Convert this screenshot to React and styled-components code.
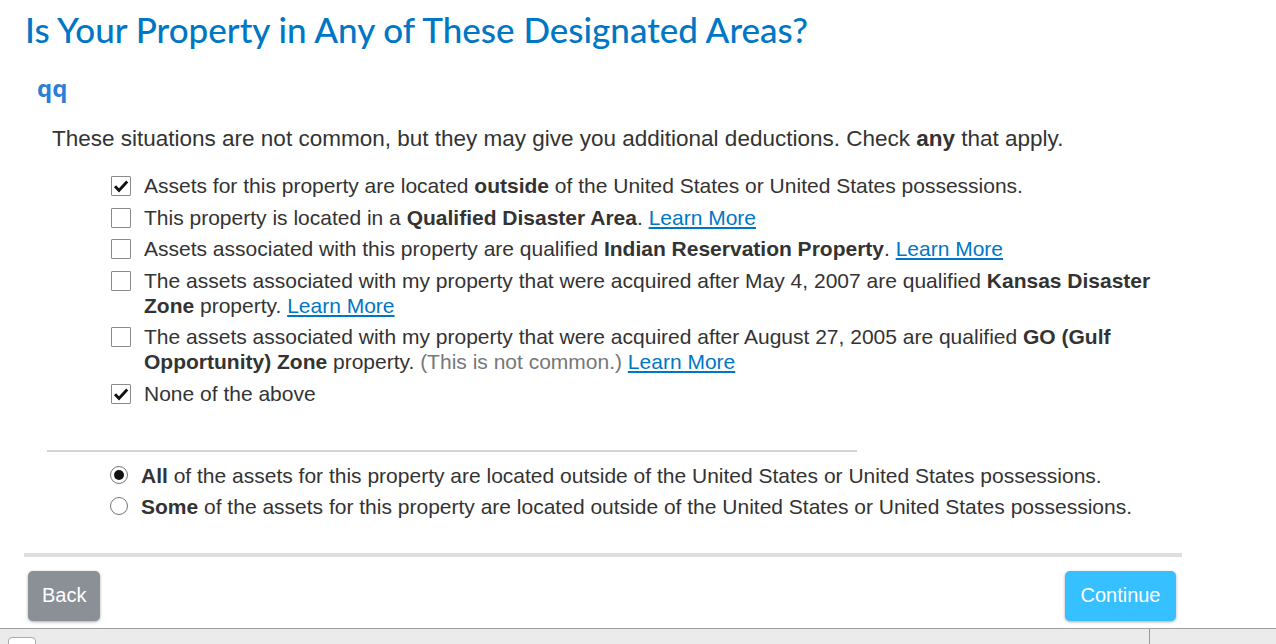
import React from 'react'
import styled, { createGlobalStyle } from 'styled-components'

const GlobalStyle = createGlobalStyle`
    html, body {
        margin: 0;
        padding: 0;
        background: #fff;
        overflow: hidden;
    }
    body {
        font-family: "Liberation Sans", Arial, sans-serif;
        color: #333;
    }
`

const Page = styled.div`
    display: flex;
    flex-direction: column;
    min-height: 644px;
`

const Main = styled.main`
    width: 1158px;
    padding: 0 24px;
`

const Title = styled.h1`
    margin: 8px 0 0 1px;
    font-family: Lato, "Open Sans", sans-serif;
    font-weight: 500;
    font-size: 35px;
    line-height: 42px;
    color: #0077c5;
`

const SubTitle = styled.h2`
    margin: 23px 0 0 13px;
    font-family: "Open Sans", sans-serif;
    font-weight: 700;
    font-size: 24px;
    line-height: 30px;
    color: #2b7fd6;
`

const Intro = styled.p`
    margin: 22px 0 0 28px;
    font-size: 22.5px;
    line-height: 28px;
    color: #333;
`

const OptionList = styled.ul`
    list-style: none;
    margin: 20px 0 0 87px;
    padding: 0;
    width: 1065px;
    display: flex;
    flex-direction: column;
    gap: 6.5px;
`

const OptionRow = styled.li`
    display: flex;
    align-items: flex-start;
    gap: 13px;
    font-size: 21px;
    line-height: 25px;
`

const Box = styled.span`
    flex: none;
    box-sizing: border-box;
    width: 20px;
    height: 20px;
    margin-top: 3px;
    border: 1px solid #8a8a8a;
    border-radius: 1px;
    background: #fff;
    display: flex;
    align-items: center;
    justify-content: center;
`

const Label = styled.span`
    color: #333;

    b {
        font-weight: 700;
        color: #333;
    }
`

const Link = styled.a`
    color: #0077c5;
    text-decoration: underline;
    cursor: pointer;
`

const Muted = styled.span`
    color: #777;
`

const Divider = styled.hr`
    margin: 44px 0 0 23px;
    width: 810px;
    border: 0;
    height: 2px;
    background: #d4d4d4;
`

const RadioList = styled.div`
    margin: 11px 0 0 86px;
    display: flex;
    flex-direction: column;
    gap: 6px;
`

const RadioRow = styled.label`
    display: flex;
    align-items: center;
    gap: 13px;
    font-size: 21px;
    line-height: 25px;

    b {
        font-weight: 700;
    }
`

const Circle = styled.span`
    flex: none;
    box-sizing: border-box;
    width: 18px;
    height: 18px;
    border-radius: 50%;
    border: 1px solid #767676;
    display: flex;
    align-items: center;
    justify-content: center;

    &::after {
        content: '';
        width: 10px;
        height: 10px;
        border-radius: 50%;
        background: ${p => (p.$checked ? '#111' : 'transparent')};
    }
`

const FooterRule = styled.div`
    margin-top: 34px;
    height: 4px;
    background: #dedede;
`

const ButtonRow = styled.div`
    display: flex;
    justify-content: space-between;
    padding: 14px 6px 0 4px;
`

const Button = styled.button`
    height: 50px;
    padding: 0 ${p => (p.$primary ? '15.5px' : '14px')};
    border: 0;
    border-radius: 5px;
    font-family: "Liberation Sans", Arial, sans-serif;
    font-size: 20px;
    color: #fff;
    background: ${p => (p.$primary ? '#36c0ff' : '#8b8f96')};
    box-shadow: 0 1px 3px rgba(0, 0, 0, 0.35);
    cursor: pointer;
`

const StatusBar = styled.div`
    margin-top: 7px;
    height: 40px;
    border-top: 1px solid #a0a0a0;
    background: #ebebeb;
    display: flex;
`

const StatusCell = styled.div`
    flex: 1;
    padding: 8px 0 0 8px;
`

const StatusSide = styled.div`
    width: 126px;
    border-left: 1px solid #999;
`

const Knob = styled.span`
    display: block;
    width: 28px;
    height: 24px;
    box-sizing: border-box;
    border: 1px solid #aaa;
    border-radius: 4px;
    background: #fff;
`

const Check = () => (
    <svg width="16" height="14" viewBox="0 0 16 14">
        <path d="M2 7.2 L6 11.4 L14.2 2.4" fill="none" stroke="#111" strokeWidth="2.9" />
    </svg>
)

const Checkbox = ({ checked }) => <Box>{checked && <Check />}</Box>

const options = [
    {
        checked: true,
        text: <>Assets for this property are located <b>outside</b> of the United States or United States possessions.</>,
    },
    {
        checked: false,
        text: <>This property is located in a <b>Qualified Disaster Area</b>. <Link>Learn More</Link></>,
    },
    {
        checked: false,
        text: <>Assets associated with this property are qualified <b>Indian Reservation Property</b>. <Link>Learn More</Link></>,
    },
    {
        checked: false,
        text: <>The assets associated with my property that were acquired after May 4, 2007 are qualified <b>Kansas Disaster Zone</b> property. <Link>Learn More</Link></>,
    },
    {
        checked: false,
        text: <>The assets associated with my property that were acquired after August 27, 2005 are qualified <b>GO (Gulf Opportunity) Zone</b> property. <Muted>(This is not common.)</Muted> <Link>Learn More</Link></>,
    },
    {
        checked: true,
        text: <>None of the above</>,
    },
]

const App = () => {
    const [scope, setScope] = React.useState('all')

    return (
        <Page>
            <GlobalStyle />
            <Main>
                <Title>Is Your Property in Any of These Designated Areas?</Title>
                <SubTitle>qq</SubTitle>
                <Intro>
                    These situations are not common, but they may give you additional deductions. Check <b>any</b> that apply.
                </Intro>
                <OptionList>
                    {options.map((o, i) => (
                        <OptionRow key={i}>
                            <Checkbox checked={o.checked} />
                            <Label>{o.text}</Label>
                        </OptionRow>
                    ))}
                </OptionList>
                <Divider />
                <RadioList>
                    <RadioRow onClick={() => setScope('all')}>
                        <Circle $checked={scope === 'all'} />
                        <span><b>All</b> of the assets for this property are located outside of the United States or United States possessions.</span>
                    </RadioRow>
                    <RadioRow onClick={() => setScope('some')}>
                        <Circle $checked={scope === 'some'} />
                        <span><b>Some</b> of the assets for this property are located outside of the United States or United States possessions.</span>
                    </RadioRow>
                </RadioList>
                <FooterRule />
                <ButtonRow>
                    <Button>Back</Button>
                    <Button $primary>Continue</Button>
                </ButtonRow>
            </Main>
            <StatusBar>
                <StatusCell><Knob /></StatusCell>
                <StatusSide />
            </StatusBar>
        </Page>
    )
}

export default App
